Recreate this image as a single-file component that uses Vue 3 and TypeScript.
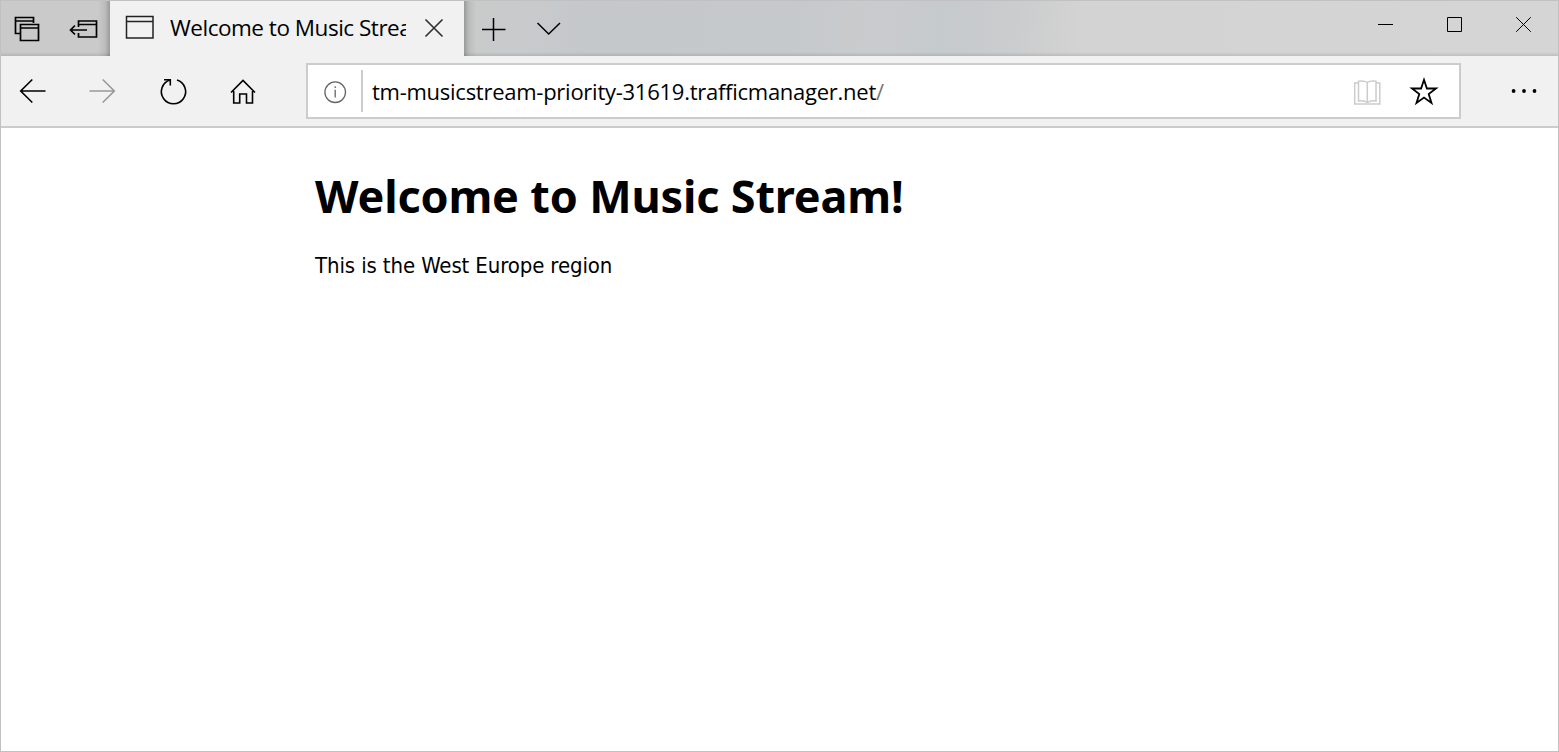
<script setup lang="ts">
const tabTitle = 'Welcome to Music Stream!'
const host = 'tm-musicstream-priority-31619.trafficmanager.net'
const path = '/'
const heading = 'Welcome to Music Stream!'
const message = 'This is the West Europe region'
</script>

<template>
  <div class="window">
    <header class="titlebar">
      <div class="tab-tools">
        <svg width="54" height="55" viewBox="1 1 54 55" class="icon heavy">
          <path d="M20 33.500h-4.500v-16h18V23M15.500 21h18" />
          <path d="M20.500 24.500h18v16h-18zM20.500 28h18" />
        </svg>
        <svg width="55" height="55" viewBox="55 1 55 55" class="icon heavy">
          <path d="M78.500 27v-6h18v16h-18v-4M78.500 24.500h18M87 30H70.500M75 25.500L70.500 30l4.500 4.500" />
        </svg>
      </div>
      <div class="tab">
        <svg width="29" height="25" viewBox="125 15 29 25" class="icon tab-page">
          <path d="M126.500 16.500h26.500v21.500h-26.500zM126.500 21.500h26.500" />
        </svg>
        <span class="tab-title">{{ tabTitle }}</span>
        <svg width="20" height="20" viewBox="424 18 20 20" class="icon tab-close">
          <path d="M425.500 19.500l17 17M442.500 19.500l-17 17" />
        </svg>
      </div>
      <svg width="100" height="55" viewBox="464 1 100 55" class="icon new-tab">
        <path d="M482 29.500h23.500M493.500 18v23" />
        <path d="M537.500 23l11.200 11L560 23" class="thin" />
      </svg>
      <svg width="208" height="55" viewBox="1350 1 208 55" class="icon controls">
        <path d="M1378 24.500h15" />
        <path d="M1447.500 17.500h14v14h-14z" />
        <path d="M1516.200 17.200l14.600 14.600M1530.800 17.200l-14.600 14.600" />
      </svg>
    </header>

    <nav class="toolbar">
      <svg width="66" height="70" viewBox="1 56 66 70" class="icon">
        <path d="M45.500 91H21M32.300 79.500L20.700 91l11.600 11.500" />
      </svg>
      <svg width="70" height="70" viewBox="67 56 70 70" class="icon disabled">
        <path d="M89.500 91H114M102.700 79.500L114.300 91l-11.600 11.500" />
      </svg>
      <svg width="71" height="70" viewBox="137 56 71 70" class="icon">
        <path d="M177 80.100A12.100 12.100 0 1 1 170 80.100" />
        <path d="M164 79.700h6.300v5.800" />
      </svg>
      <svg width="70" height="70" viewBox="208 56 70 70" class="icon">
        <path d="M231 92.500L243 80.500l12 12M233.700 91v12h6V94h6.800v9h6V91" />
      </svg>
      <div class="address">
        <svg width="53" height="52" viewBox="308 65 53 52" class="icon info">
          <circle cx="335.200" cy="92.200" r="10.300" />
          <path d="M335.200 89.800v7.700M335.200 86.300v1.800" />
        </svg>
        <span class="divider"></span>
        <span class="url">{{ host }}<span class="path">{{ path }}</span></span>
        <svg width="60" height="52" viewBox="1340 65 60 52" class="icon book">
          <path d="M1367.300 82.500c-3-2-6-1.700-8.800-1.200v19.700c3-.5 6-.8 8.800 1.500c2.800-2.300 5.800-2 8.700-1.500V81.300c-3-.5-5.800-.8-8.700 1.200v20" />
          <path d="M1358 83h-3.300v21h25.100V83H1376" />
        </svg>
        <svg width="59" height="52" viewBox="1400 65 59 52" class="icon star">
          <path d="M1424 79.800l2.900 8.700h9.100l-7.300 5.500 2.800 8.900-7.500-5.400-7.500 5.400 2.800-8.900-7.300-5.500h9.100z" />
        </svg>
      </div>
      <svg width="69" height="70" viewBox="1489 56 69 70" class="more">
        <circle cx="1513.600" cy="91" r="1.900" />
        <circle cx="1524" cy="91" r="1.900" />
        <circle cx="1534.500" cy="91" r="1.900" />
      </svg>
    </nav>

    <main class="page">
      <h1>{{ heading }}</h1>
      <p>{{ message }}</p>
    </main>
  </div>
</template>

<style>
body {
  margin: 0;
  overflow: hidden;
}
</style>

<style scoped>
.window {
  box-sizing: border-box;
  width: 1559px;
  height: 752px;
  border: 1px solid #c1c1c1;
  background: #fff;
  color: #000;
  display: flex;
  flex-direction: column;
}

svg {
  display: block;
  flex: none;
}

.icon {
  fill: none;
  stroke: #000;
  stroke-width: 1.6;
}

.heavy {
  stroke-width: 1.7;
}

.titlebar {
  height: 55px;
  flex: none;
  display: flex;
  background:
    linear-gradient(to bottom, transparent 51px, rgba(0, 0, 0, 0.1) 55px),
    linear-gradient(95deg, #cacaca 0, #cacaca 460px, #c9cacc 520px, #c4c8cb 590px, #c5c9cc 780px, #cacbcd 880px, #c5cacd 940px, #cbcccd 1010px, #d3d3d3 1080px, #d5d5d5 1557px);
}

.tab-tools {
  display: flex;
  width: 109px;
  background: linear-gradient(to right, transparent 97px, rgba(0, 0, 0, 0.07) 104px, rgba(0, 0, 0, 0.24));
}

.tab {
  box-sizing: border-box;
  width: 354px;
  padding: 0 20px 0 15px;
  display: flex;
  background: #f1f1f1;
}

.tab-page {
  margin-top: 14px;
  stroke: #222;
  stroke-width: 1.5;
}

.tab-title {
  width: 236px;
  margin-left: 16px;
  overflow: hidden;
  white-space: nowrap;
  font: 22.5px/54px "Open Sans", "Noto Sans", sans-serif;
  letter-spacing: -0.48px;
}

.tab-close {
  margin: 17px 0 0 18px;
  stroke: #333;
  stroke-width: 1.7;
}

.new-tab {
  background: linear-gradient(to left, transparent 88px, rgba(0, 0, 0, 0.07) 95px, rgba(0, 0, 0, 0.24));
  stroke-width: 1.5;
}

.thin {
  stroke-width: 1.5;
}

.controls {
  margin-left: auto;
  stroke-width: 1;
}

.toolbar {
  height: 70px;
  flex: none;
  display: flex;
  align-items: center;
  background: #f1f1f1;
  border-bottom: 2px solid #ccc;
}

.disabled {
  stroke: #999;
}

.address {
  box-sizing: border-box;
  width: 1155px;
  height: 56px;
  margin: 0 28px;
  border: 2px solid #ccc;
  background: #fff;
  display: flex;
  align-items: center;
}

.info {
  stroke: #666;
  stroke-width: 1.3;
}

.divider {
  width: 2px;
  height: 42px;
  background: #ccc;
}

.url {
  flex: 1;
  margin-left: 9px;
  white-space: nowrap;
  font: 22px/52px "Open Sans", "Noto Sans", sans-serif;
  letter-spacing: -0.26px;
}

.path {
  color: #777;
}

.book {
  stroke: #ccc;
  stroke-width: 1.5;
}

.star {
  stroke-width: 1.8;
}

.more {
  fill: #000;
}

.page {
  padding: 40px 0 0 314px;
}

h1 {
  margin: 0;
  font: 700 45px/56px "Noto Sans", "Open Sans", sans-serif;
  letter-spacing: -0.17px;
  white-space: nowrap;
}

p {
  margin: 28px 0 0;
  font: 22px/28px "DejaVu Sans Condensed", "Noto Sans", sans-serif;
  letter-spacing: -0.12px;
}
</style>
